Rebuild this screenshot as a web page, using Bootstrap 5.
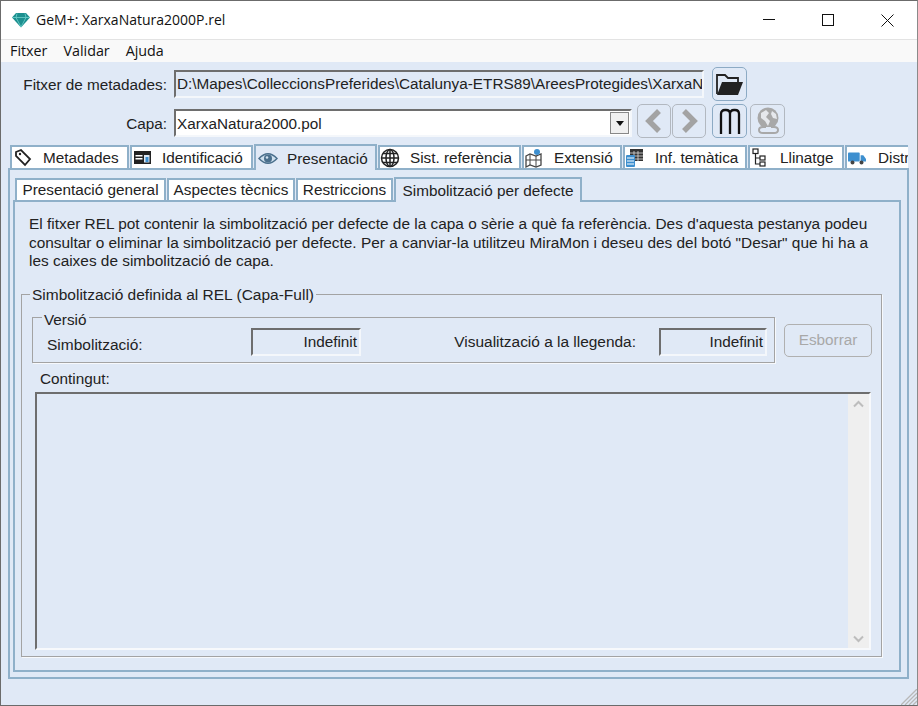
<!DOCTYPE html>
<html lang="ca">
<head>
<meta charset="utf-8">
<title>GeM+</title>
<link href="https://cdn.jsdelivr.net/npm/bootstrap@5.3.0/dist/css/bootstrap.min.css" rel="stylesheet">
<style>
html,body{margin:0;height:100%;overflow:hidden;background:#e0e9f6}
body{font-family:"Liberation Sans",Arial,sans-serif;font-size:15.3px;color:#222;line-height:18px}
.win{width:918px;height:706px;display:flex;flex-direction:column;border:1px solid #6b6b6b;border-right-color:#8a8a8a;position:relative;overflow:hidden}
.tbar{height:39px;flex:none;background:#fff;border-bottom:1px solid #e3e3e3;display:flex;align-items:center;padding-left:10px;font-family:"Open Sans","Liberation Sans",sans-serif;font-size:14px;color:#111}
.tbar .ttl{margin-left:5px}
.wbtn{width:59px;height:38px;display:flex;align-items:center;justify-content:center}
.mbar{height:22px;flex:none;background:#f9f9f9;display:flex;align-items:center;padding-left:9px;gap:16px;font-family:"Open Sans","Liberation Sans",sans-serif;font-size:14.3px;color:#111}
.wmain{flex:1;min-height:0;display:flex;flex-direction:column;padding:5px 9px 0 7px}
.frow{display:flex;align-items:center;height:34px}
.frow+.frow{margin-top:3px}
.flabel{width:166px;text-align:right;padding-right:7px;flex:none;padding-top:2px}
.frow+.frow .flabel{padding-top:6px}
.sunk{height:28px;border:2px solid;border-color:#6e6e6e #f4f7fb #f4f7fb #6e6e6e;background:#e0e9f6;display:flex;align-items:center;padding:0 2px 0 1px;white-space:nowrap;overflow:hidden}
.pathf{width:530px}
.combo{width:458px;background:#fff;padding-right:0;justify-content:space-between;margin-top:4px}
.ctext{padding-top:2px}
.carrow{width:19px;height:22px;background:#f0f0f0;border:1px solid #888;display:flex;align-items:center;justify-content:center;flex:none;margin-right:1px}
.carrow i{border:solid transparent;border-width:5px 4px 0;border-top-color:#111;display:block}
.ibtn{width:35px;height:34px;padding:0;border:1.5px solid #8caac4;border-radius:5px;background:#e0e9f6;display:flex;align-items:center;justify-content:center;flex:none}
.ibtn.off{border-color:#b2b8c0}
.ibtn.nrw{width:34px}
.ml-a{margin-left:8px}.ml-b{margin-left:5px}.ml-c{margin-left:1px}.ml-d{margin-left:3px}.ml-e{margin-left:6px}
.tabs-a,.tabs-b{border:0;flex-wrap:nowrap;flex:none;overflow:hidden;position:relative;z-index:2;padding:0;margin:0}
.tabs-a{margin:6px 0 0 2px;height:26px;width:898px;align-items:flex-start}
.tabs-a .tabx{flex:none;height:24px;margin-top:1px;margin-right:1px;background:#fff;border:2px solid #8fb0c9;border-bottom-width:1px;padding:0;display:flex;align-items:center;color:#222;border-radius:0;white-space:nowrap}
.tabs-a .tabx svg{flex:none}
.tabs-a .tabx.on{height:26px;margin-top:0;background:#e0e9f6;border-bottom:0;padding-top:1px}
.t1{width:119px}.t2{width:123px}.t3{width:123px}.t4{width:143px}.t5{width:100px}.t6{width:124px}.t7{width:96px}.t8{width:80px}
.ic-2{margin-left:2px}.ic-1{margin-left:1px}
.tx-9{margin-left:9px}.tx-10{margin-left:10px}.tx-11{margin-left:11px}.tx-12{margin-left:12px}.tx-14{margin-left:14px}
.panel-a{flex:none;margin:-2px 0 0 0;height:511px;width:901px;border:2px solid #8fb0c9;position:relative;padding:7px 6px 0 3px;display:flex;flex-direction:column}
.tabs-b{height:25px;align-items:flex-start;margin-left:2px;flex:none}
.tabs-b .tabx{flex:none;height:23px;margin-top:1px;margin-right:1px;background:#fff;border:2px solid #8fb0c9;border-bottom-width:1px;border-radius:0;color:#222;padding:0;display:flex;align-items:center;justify-content:center;white-space:nowrap}
.tabs-b .tabx.on{height:25px;margin-top:0;background:#e0e9f6;border-bottom:0}
.b1{width:151px}.b2{width:128px}.b3{width:97px}.b4{width:188px}
.panel-b{flex:none;height:472px;margin-top:-2px;border:2px solid #8fb0c9;padding:13px 17px 0 6px}
.para{margin:0 0 0 8px;line-height:18.6px;height:70px;font-size:15.4px;white-space:nowrap}
.grp{border:1px solid #a3a3a3;box-shadow:1px 1px 0 #f7f9fc;margin:0;padding:0;min-width:0}
.grp>legend{float:none;width:auto;font-size:15.3px;line-height:18px;padding:0 2px;color:#222;position:relative}
.g1{height:372px;padding:0 9px 0 13px;position:relative}
.g1>legend{margin:0 0 0 -5px;top:1px;font-size:15.5px}
.verrow{display:flex;align-items:flex-start}
.g2{width:744px;height:54px;margin:6px 0 0 -3px}
.g2>legend{margin:0 0 0 9px;line-height:17px;top:2px}
.g2row{display:flex;align-items:center;height:29px;padding-left:14px;margin-top:1px}
.lbl-a{width:204px;padding-top:6px;font-size:15.5px}
.lbl-b{width:298px;text-align:right;padding-right:23px;font-size:15.45px}
.roval{width:110px;height:28px;justify-content:flex-end;flex:none}
.roval.rv2{width:108px}
.btn.esb,.btn.esb:disabled{width:88px;height:33px;margin:21px 0 0 9px;padding:0;border:1.5px solid #b0b0b0;border-radius:5px;background:#e0e9f6;color:#a8a8a8;font-size:15.3px;opacity:1}
.cntl{padding-left:5px;margin-top:5px;height:24px;line-height:22px}
.ctbox{height:258px;width:836px;border:2px solid;border-color:#6e6e6e #f7f9fc #f7f9fc #6e6e6e;display:flex;justify-content:flex-end;background:#e0e9f6}
.vsb{width:21px;background:#efefef;display:flex;flex-direction:column;justify-content:space-between;align-items:center;padding:6px 0 5px}
.grip{position:absolute;right:0;bottom:0}
</style>
</head>
<body>
<div class="win">
  <div class="tbar">
    <svg width="20" height="16" viewBox="0 0 20 16"><path d="M5 1h10l4 4.500L10 15.500 1 5.500z" fill="#1c8f8f"/><path d="M1.500 5.500h17M6 1.500 5 5.500l5 9.500 5-9.500-1-4" fill="none" stroke="#6fd0cc" stroke-width=".8"/></svg>
    <span class="ttl flex-grow-1">GeM+: XarxaNatura2000P.rel</span>
    <span class="wbtn"><svg width="13" height="13" viewBox="0 0 13 13"><path d="M0 5.500h12" stroke="#111"/></svg></span>
    <span class="wbtn"><svg width="13" height="13" viewBox="0 0 13 13"><rect x=".5" y=".5" width="11" height="11" fill="none" stroke="#111"/></svg></span>
    <span class="wbtn"><svg width="13" height="13" viewBox="0 0 13 13"><path d="M.5.500l12 12M12.500.500l-12 12" stroke="#111" fill="none"/></svg></span>
  </div>
  <div class="mbar"><span>Fitxer</span><span>Validar</span><span>Ajuda</span></div>
  <div class="wmain">
    <div class="frow">
      <div class="flabel">Fitxer de metadades:</div>
      <div class="sunk pathf">D:\Mapes\ColleccionsPreferides\Catalunya-ETRS89\AreesProtegides\XarxaN</div>
      <button class="btn ibtn ml-a" type="button" aria-label="Obrir">
        <svg width="29" height="25" viewBox="0 0 29 25"><path d="M2 22V3h8l3 3h10v4" fill="none" stroke="#222" stroke-width="1.800"/><path d="M2 23 7 10h21l-5 13z" fill="#222"/></svg>
      </button>
    </div>
    <div class="frow">
      <div class="flabel">Capa:</div>
      <div class="sunk combo"><span class="ctext">XarxaNatura2000.pol</span><span class="carrow"><i></i></span></div>
      <button class="btn ibtn nrw off ml-b" type="button" aria-label="Anterior"><svg width="20" height="26" viewBox="0 0 20 26"><path d="M15 3 5 13l10 10" fill="none" stroke="#a3a3a3" stroke-width="5.500"/></svg></button>
      <button class="btn ibtn nrw off ml-c" type="button" aria-label="Següent"><svg width="20" height="26" viewBox="0 0 20 26"><path d="M5 3l10 10L5 23" fill="none" stroke="#a3a3a3" stroke-width="5.500"/></svg></button>
      <button class="btn ibtn ml-e" type="button" aria-label="MiraMon"><svg width="24" height="28" viewBox="0 0 24 28"><path d="M3 27V7Q3 3 7 3h1q4 0 4 4v20M12 7q0-4 4-4h1q4 0 4 4v20" fill="none" stroke="#111" stroke-width="2.300"/></svg></button>
      <button class="btn ibtn off ml-d" type="button" aria-label="Web"><svg width="28" height="28" viewBox="0 0 28 28"><circle cx="14" cy="11" r="10.500" fill="#a8a8a8"/><path d="M7 6l5-3 3 3-3 4 4 4-2 5-3-5-4-3zM18 4l4 3 1 5-4-1-2-4z" fill="#e6e8ec"/><path d="M12 20h-3q-4 0-4 3t4 3h11q4 0 4-3t-4-3h-3" fill="#e0e9f6" stroke="#a8a8a8" stroke-width="2"/></svg></button>
    </div>
    <ul class="nav nav-tabs tabs-a">
      <li class="tabx t1"><svg class="ic-2" width="19" height="19" viewBox="0 0 19 19"><path d="M2 4 7 2l9 9-5 6-9-9z" fill="#fff" stroke="#222" stroke-width="1.800"/><circle cx="6" cy="6" r="1.200" fill="#222"/></svg><span class="tx-10">Metadades</span></li>
      <li class="tabx t2"><svg class="ic-2" width="17" height="15" viewBox="0 0 17 15"><rect y="1" width="17" height="13" fill="#222"/><rect x="1.500" y="5" width="7" height="1.500" fill="#fff"/><rect x="1.500" y="8" width="7" height="1.500" fill="#fff"/><rect x="10" y="5" width="5.500" height="7.500" fill="#dce8f4"/><rect x="11.500" y="7" width="3" height="5" fill="#3d8fcf"/></svg><span class="tx-11">Identificació</span></li>
      <li class="tabx t3 on"><svg class="ic-2" width="20" height="15" viewBox="0 0 20 15"><path d="M1 7.500Q10-2 19 7.500 10 17 1 7.500z" fill="#cfe0ee" stroke="#4a6f8c" stroke-width="1.500"/><circle cx="10" cy="7.500" r="4" fill="#4a6f8c"/><circle cx="9" cy="6.500" r="1.300" fill="#cfe0ee"/></svg><span class="tx-9">Presentació</span></li>
      <li class="tabx t4"><svg width="20" height="20" viewBox="0 0 20 20"><g fill="none" stroke="#222" stroke-width="1.500"><circle cx="10" cy="10" r="8.500"/><ellipse cx="10" cy="10" rx="4" ry="8.500"/><path d="M1.500 10h17M3 5.500h14M3 14.500h14M10 1.500v17"/></g></svg><span class="tx-10">Sist. referència</span></li>
      <li class="tabx t5"><svg width="19" height="20" viewBox="0 0 19 20"><path d="M2 8 6 6l6 2 5-2v11l-5 2-6-2-4 2z" fill="#fff" stroke="#444" stroke-width="1.300"/><path d="M6 6v11M12 8v11M2 12h15" stroke="#444" fill="none"/><circle cx="13" cy="4" r="3" fill="#3d8fcf"/></svg><span class="tx-11">Extensió</span></li>
      <li class="tabx t6"><svg width="19" height="20" viewBox="0 0 19 20"><rect x="5" y="1" width="13" height="12" fill="#333"/><path d="M5 5h13M5 8h13M5 11h13M9 3v10M13 3v10" stroke="#ddd" stroke-width=".8"/><rect x="1" y="7" width="9" height="12" rx="1" fill="#3d8fcf"/><path d="M2 10h7M2 13h7M2 16h7" stroke="#fff"/></svg><span class="tx-11">Inf. temàtica</span></li>
      <li class="tabx t7"><svg class="ic-2" width="14" height="19" viewBox="0 0 14 19"><g fill="#fff" stroke="#222" stroke-width="1.200"><rect x="1" y="1" width="5" height="4.500"/><rect x="8" y="8" width="5" height="4"/><rect x="8" y="14" width="5" height="4"/></g><path d="M3.500 5.500V16H8M3.500 10H8" fill="none" stroke="#222" stroke-width="1.200"/></svg><span class="tx-14">Llinatge</span></li>
      <li class="tabx t8"><svg class="ic-1" width="18" height="16" viewBox="0 0 20 16"><rect x="0" y="2" width="13" height="10" rx="1" fill="#3d8fcf"/><path d="M14 5h3l3 4v3h-6z" fill="#3d8fcf"/><circle cx="5" cy="13" r="2.200" fill="#444"/><circle cx="15" cy="13" r="2.200" fill="#444"/></svg><span class="tx-12">Distr</span></li>
    </ul>
    <div class="panel-a">
      <ul class="nav nav-tabs tabs-b">
        <li class="tabx b1">Presentació general</li>
        <li class="tabx b2">Aspectes tècnics</li>
        <li class="tabx b3">Restriccions</li>
        <li class="tabx b4 on">Simbolització per defecte</li>
      </ul>
      <div class="panel-b">
        <p class="para">El fitxer REL pot contenir la simbolització per defecte de la capa o sèrie a què fa referència. Des d'aquesta pestanya podeu<br>consultar o eliminar la simbolització per defecte. Per a canviar-la utilitzeu MiraMon i deseu des del botó "Desar" que hi ha a<br>les caixes de simbolització de capa.</p>
        <fieldset class="grp g1">
          <legend>Simbolització definida al REL (Capa-Full)</legend>
          <div class="verrow">
            <fieldset class="grp g2">
              <legend>Versió</legend>
              <div class="g2row">
                <span class="lbl-a">Simbolització:</span>
                <span class="sunk roval">Indefinit</span>
                <span class="lbl-b">Visualització a la llegenda:</span>
                <span class="sunk roval rv2">Indefinit</span>
              </div>
            </fieldset>
            <button class="btn esb" type="button" disabled>Esborrar</button>
          </div>
          <div class="cntl">Contingut:</div>
          <div class="ctbox">
            <div class="vsb">
              <svg width="11" height="8" viewBox="0 0 11 8"><path d="M1 6.500l4.500-4.500L10 6.500" fill="none" stroke="#bdbdbd" stroke-width="2"/></svg>
              <svg width="11" height="8" viewBox="0 0 11 8"><path d="M1 1.500l4.500 4.500L10 1.500" fill="none" stroke="#bdbdbd" stroke-width="2"/></svg>
            </div>
          </div>
        </fieldset>
      </div>
    </div>
    <svg class="grip" width="16" height="16" viewBox="0 0 16 16"><path d="M0 16 16 0M4 16 16 4M8 16l8-8M12 16l4-4" stroke="#b8b8b8" stroke-width="1.300"/></svg>
  </div>
</div>
</body>
</html>
